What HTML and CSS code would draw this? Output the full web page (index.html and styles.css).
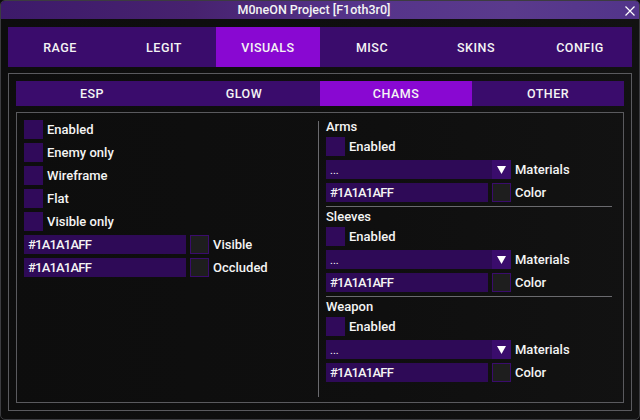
FILE: index.html
```html
<!DOCTYPE html>
<html>
<head>
<meta charset="utf-8">
<link rel="stylesheet" href="styles.css">
</head>
<body>
<div class="window">
  <div class="titlebar">
    <span class="title">M0neON Project [F1oth3r0]</span>
    <svg class="close" width="10" height="10" viewBox="0 0 10 10"><path d="M0.5 0.5 L9.5 9.5 M9.5 0.5 L0.5 9.5" stroke="#ffffff" stroke-width="1.2" fill="none"/></svg>
  </div>
  <div class="body">
    <div class="tabs main-tabs">
      <div class="tab">RAGE</div>
      <div class="tab">LEGIT</div>
      <div class="tab active">VISUALS</div>
      <div class="tab">MISC</div>
      <div class="tab">SKINS</div>
      <div class="tab">CONFIG</div>
    </div>
    <div class="frame outer">
      <div class="tabs sub-tabs">
        <div class="tab">ESP</div>
        <div class="tab">GLOW</div>
        <div class="tab active">CHAMS</div>
        <div class="tab">OTHER</div>
      </div>
      <div class="frame inner">
        <div class="col left">
          <div class="row"><span class="check"></span><span class="label">Enabled</span></div>
          <div class="row"><span class="check"></span><span class="label">Enemy only</span></div>
          <div class="row"><span class="check"></span><span class="label">Wireframe</span></div>
          <div class="row"><span class="check"></span><span class="label">Flat</span></div>
          <div class="row"><span class="check"></span><span class="label">Visible only</span></div>
          <div class="row"><span class="input">#1A1A1AFF</span><span class="swatch"></span><span class="label">Visible</span></div>
          <div class="row"><span class="input">#1A1A1AFF</span><span class="swatch"></span><span class="label">Occluded</span></div>
        </div>
        <div class="divider"></div>
        <div class="col right">
          <div class="heading">Arms</div>
          <div class="row"><span class="check"></span><span class="label">Enabled</span></div>
          <div class="row"><span class="combo"><span class="combo-text">...</span><span class="arrow"><svg width="9" height="8" viewBox="0 0 9 8"><polygon points="0,0 9,0 4.5,8" fill="#ffffff"/></svg></span></span><span class="label">Materials</span></div>
          <div class="row"><span class="input">#1A1A1AFF</span><span class="swatch"></span><span class="label">Color</span></div>
          <div class="sep"></div>
          <div class="heading">Sleeves</div>
          <div class="row"><span class="check"></span><span class="label">Enabled</span></div>
          <div class="row"><span class="combo"><span class="combo-text">...</span><span class="arrow"><svg width="9" height="8" viewBox="0 0 9 8"><polygon points="0,0 9,0 4.5,8" fill="#ffffff"/></svg></span></span><span class="label">Materials</span></div>
          <div class="row"><span class="input">#1A1A1AFF</span><span class="swatch"></span><span class="label">Color</span></div>
          <div class="sep"></div>
          <div class="heading">Weapon</div>
          <div class="row"><span class="check"></span><span class="label">Enabled</span></div>
          <div class="row"><span class="combo"><span class="combo-text">...</span><span class="arrow"><svg width="9" height="8" viewBox="0 0 9 8"><polygon points="0,0 9,0 4.5,8" fill="#ffffff"/></svg></span></span><span class="label">Materials</span></div>
          <div class="row"><span class="input">#1A1A1AFF</span><span class="swatch"></span><span class="label">Color</span></div>
        </div>
      </div>
    </div>
  </div>
</div>
</body>
</html>
```
FILE: styles.css
```css
* { box-sizing: border-box; }
html, body {
  margin: 0;
  padding: 0;
  background: #0b0b0b;
}
body {
  font-family: Roboto, "Liberation Sans", sans-serif;
  color: #ffffff;
  font-size: 13px;
}
.window {
  width: 640px;
  height: 420px;
  border: 1px solid #3c3c40;
  border-radius: 5px;
  overflow: hidden;
  background: linear-gradient(90deg, #0d0d0d 0%, #0f0f0f 60%, #121212 100%);
  display: flex;
  flex-direction: column;
}
.titlebar {
  height: 18px;
  flex: none;
  background: linear-gradient(90deg, #3d1a6a 0%, #47226f 30%, #55338a 55%, #5a3a8c 80%, #52348a 100%);
  display: flex;
  align-items: center;
  position: relative;
}
.title {
  flex: 1;
  text-align: center;
  padding-right: 12px;
  font-size: 12.5px;
  font-weight: 500;
  color: #f4f4f4;
  line-height: 18px;
}
.close {
  position: absolute;
  right: 4px;
  top: 5px;
}
.body {
  padding: 8px 7px 0 7px;
  display: flex;
  flex-direction: column;
}
.tabs {
  display: flex;
  background: #3a0c6c;
}
.tab {
  flex: 1;
  display: flex;
  align-items: center;
  justify-content: center;
  font-weight: 500;
  font-size: 12.5px;
  letter-spacing: 0.5px;
  color: #f4f4f4;
}
.tab.active {
  background: #8908d2;
}
.main-tabs {
  width: 624px;
  height: 40px;
  margin-bottom: 6px;
}
.frame {
  border: 1px solid #5a5a5e;
}
.outer {
  width: 624px;
  height: 338px;
  padding: 7px;
}
.sub-tabs {
  height: 25px;
  margin-bottom: 6px;
}
.inner {
  height: 291px;
  padding: 7px;
  display: flex;
}
.col {
  display: flex;
  flex-direction: column;
  gap: 4px;
}
.left {
  width: 294px;
}
.divider {
  width: 1px;
  height: 276px;
  margin-top: 1px;
  background: #6a6a6e;
}
.right {
  width: 293px;
  padding-left: 7px;
}
.row {
  display: flex;
  align-items: center;
  height: 19px;
}
.check {
  width: 19px;
  height: 19px;
  background: #300a5a;
  flex: none;
}
.label {
  margin-left: 4px;
  line-height: 19px;
  font-weight: 500;
  color: #f4f4f4;
}
.input {
  width: 162px;
  height: 19px;
  background: #2e0a57;
  padding-left: 4px;
  line-height: 19px;
  flex: none;
  font-weight: 500;
  letter-spacing: -0.8px;
  color: #f4f4f4;
}
.swatch {
  width: 19px;
  height: 19px;
  margin-left: 4px;
  background: #1e1e1e;
  border: 1px solid #3a0c6c;
  flex: none;
}
.combo {
  width: 185px;
  height: 19px;
  display: flex;
  background: #2e0a57;
  flex: none;
}
.combo-text {
  flex: 1;
  padding-left: 4px;
  font-size: 11px;
  line-height: 22px;
}
.arrow {
  width: 19px;
  height: 19px;
  background: #3a0c6c;
  display: flex;
  align-items: center;
  justify-content: center;
}
.heading {
  height: 13px;
  line-height: 13px;
  font-weight: 500;
  color: #f4f4f4;
}
.sep {
  width: 286px;
  height: 1px;
  background: #6a6a6e;
  margin-bottom: -1px;
}
```
